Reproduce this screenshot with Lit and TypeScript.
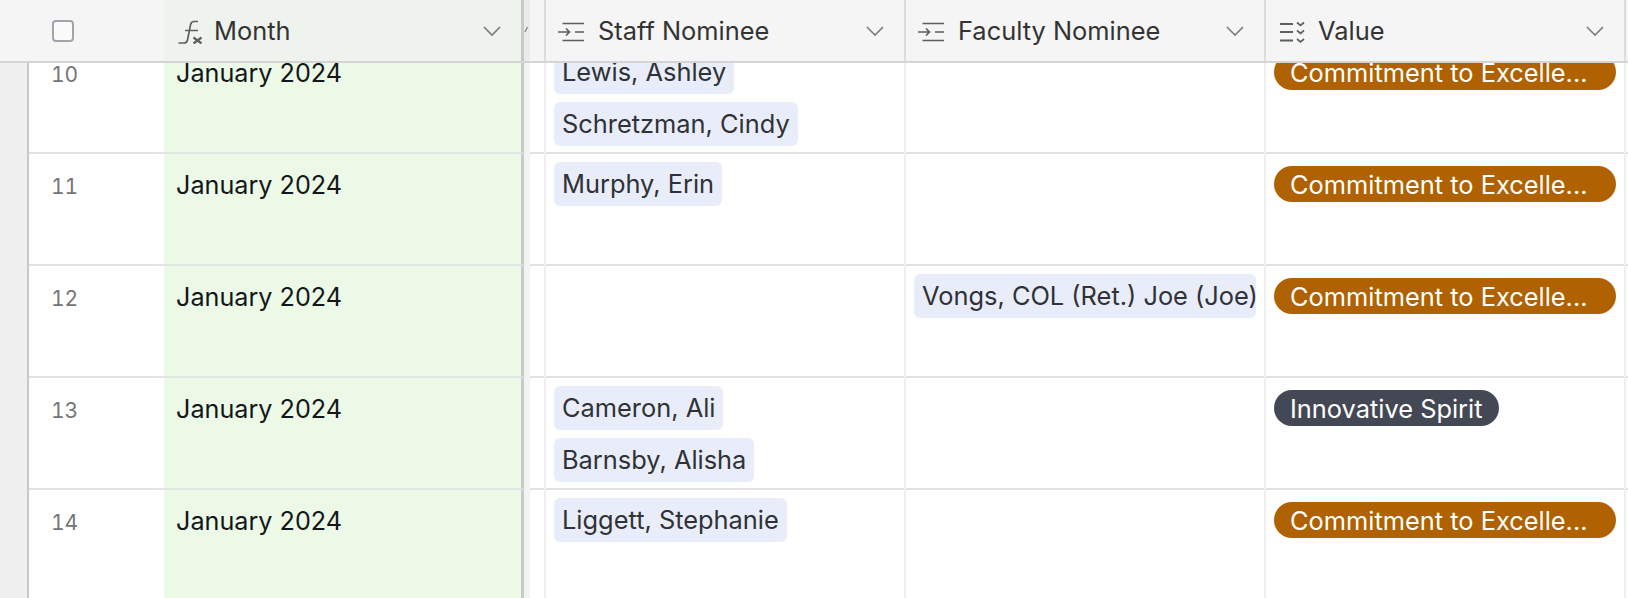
import { LitElement, html, css, svg } from 'lit';
import { customElement } from 'lit/decorators.js';

type Row = { id: number; staff: string[]; faculty?: string; value: 'commit' | 'innovate' };

const ROWS: Row[] = [
  { id: 10, staff: ['Lewis, Ashley', 'Schretzman, Cindy'], value: 'commit' },
  { id: 11, staff: ['Murphy, Erin'], value: 'commit' },
  { id: 12, staff: [], faculty: 'Vongs, COL (Ret.) Joe (Joe)', value: 'commit' },
  { id: 13, staff: ['Cameron, Ali', 'Barnsby, Alisha'], value: 'innovate' },
  { id: 14, staff: ['Liggett, Stephanie'], value: 'commit' },
];

const chevron = html`<svg class="chev" width="20" height="12" viewBox="0 0 20 12">
  <path d="M2 2l8 8 8-8" fill="none" stroke="#7b7b7b" stroke-width="1.6" />
</svg>`;

const fxIcon = html`<svg class="icon" width="26" height="26" viewBox="0 0 26 26">
  ${svg`<path d="M20 3.5h-4c-2 0-3 1-3.4 3L9.5 22c-.4 2-1.4 3-3.4 3H.5M7 12.5h13" fill="none" stroke="#5f5f5f" stroke-width="1.7"/>
  <path d="M15.5 19.5l8 6M23.5 19.5l-8 6" fill="none" stroke="#5f5f5f" stroke-width="2.2"/>`}
</svg>`;

const linkIcon = html`<svg class="icon" width="26" height="26" viewBox="0 0 26 26">
  ${svg`<path d="M4.5 5.5H26M17 14h9M4.5 22.5H26M0 14h11.5M8 10.5l3.5 3.5L8 17.5" fill="none" stroke="#5f5f5f" stroke-width="1.7"/>`}
</svg>`;

const selectIcon = html`<svg class="icon" width="26" height="26" viewBox="0 0 26 26">
  ${svg`<path d="M0 6h13M0 14h13M0 22.5h13" fill="none" stroke="#5f5f5f" stroke-width="2"/>
  <path d="M17 4.5l3.5 3 3.5-3M17 12.5l3.5 3 3.5-3M17 21l3.5 3 3.5-3" fill="none" stroke="#5f5f5f" stroke-width="1.7"/>`}
</svg>`;

@customElement('app-root')
export class AppRoot extends LitElement {
  static styles = css`
    :host {
      display: block;
      width: 1628px;
      height: 598px;
      overflow: hidden;
      background: #fff;
      font-family: Inter, 'Liberation Sans', sans-serif;
      font-size: 25.4px;
    }
    .grid {
      display: grid;
      grid-template-columns: 29px 135px 360px 22px 360px 360px 360px 2px;
    }
    .header {
      position: relative;
      z-index: 1;
      height: 61px;
      background: #f5f5f5;
      border-bottom: 2px solid #d4d4d4;
      color: #333;
    }
    .hcell {
      display: flex;
      align-items: center;
      gap: 14px;
      padding-left: 12px;
      border-right: 2px solid #dcdcdc;
      min-width: 0;
    }
    .hcell .title {
      flex: 1;
    }
    .chev {
      margin-right: 19px;
    }
    .hcheck {
      display: flex;
      align-items: center;
      padding-left: 23px;
    }
    .box {
      width: 18px;
      height: 18px;
      border: 2px solid #a0a5ab;
      border-radius: 4px;
      background: #fbfbfb;
    }
    .hmonth {
      background: #eff3ee;
      border-right: 3px solid #c9c9c9;
      padding-left: 14px;
      gap: 10px;
    }
    .hvalue {
      padding-left: 14px;
      gap: 12px;
    }
    .stripe {
      background: linear-gradient(90deg, #ebebeb 6px, transparent 6px);
      border-right: 2px solid #dcdcdc;
    }
    /* tail of a scrolled-away chevron showing beside the frozen edge */
    .tail {
      display: block;
      margin-top: 27px;
    }
    .body {
      margin-top: -21px;
    }
    .row {
      height: 110px;
      border-bottom: 2px solid #e2e2e2;
    }
    .gutter {
      background: #f0f0f0;
      border-right: 2px solid #c8c8c8;
      margin-bottom: -2px;
    }
    .num {
      color: #757575;
      font-size: 21px;
      font-variant-numeric: tabular-nums;
      line-height: 44px;
      padding: 11px 0 0 22px;
    }
    .month {
      background: #ebf9e6;
      border-right: 3px solid #c9c9c9;
      color: #14161a;
      font-size: 25.2px;
      line-height: 44px;
      padding: 9px 0 0 12px;
      margin-bottom: -2px;
      border-bottom: 2px solid #dde6e2;
    }
    .gap {
      background: linear-gradient(90deg, #f3f3f3 6px, transparent 6px);
      border-right: 2px solid #efefef;
      margin-bottom: -2px;
    }
    .cell {
      border-right: 2px solid #efefef;
      padding: 8px 8px 0 8px;
      display: flex;
      flex-direction: column;
      align-items: flex-start;
      gap: 8px;
      overflow: hidden;
      min-width: 0;
      margin-bottom: -2px;
    }
    .chip {
      height: 44px;
      line-height: 44px;
      padding: 0 8px;
      max-width: 100%;
      box-sizing: border-box;
      background: #e9edf9;
      border-radius: 6px;
      color: #2f3237;
      white-space: nowrap;
      overflow: hidden;
    }
    .pill {
      height: 36px;
      line-height: 37px;
      margin-top: 4px;
      padding: 0 16px;
      border-radius: 18px;
      color: #fff;
      white-space: nowrap;
    }
    .commit {
      background: #b06100;
      align-self: stretch;
    }
    .innovate {
      background: #444854;
    }
  `;

  render() {
    return html`
      <div class="grid header">
        <div></div>
        <div class="hcheck"><div class="box"></div></div>
        <div class="hcell hmonth">${fxIcon}<span class="title">Month</span>${chevron}</div>
        <div class="stripe">
          <svg class="tail" width="4" height="6" viewBox="0 0 4 6">
            <path d="M3.5 0L1 5" fill="none" stroke="#8a8a8a" stroke-width="1.4" />
          </svg>
        </div>
        <div class="hcell">${linkIcon}<span class="title">Staff Nominee</span>${chevron}</div>
        <div class="hcell">${linkIcon}<span class="title">Faculty Nominee</span>${chevron}</div>
        <div class="hcell hvalue">${selectIcon}<span class="title">Value</span>${chevron}</div>
        <div></div>
      </div>
      <div class="body">
        ${ROWS.map(
          (r) => html`
            <div class="grid row">
              <div class="gutter"></div>
              <div class="num">${r.id}</div>
              <div class="month">January 2024</div>
              <div class="gap"></div>
              <div class="cell">${r.staff.map((s) => html`<div class="chip">${s}</div>`)}</div>
              <div class="cell">${r.faculty ? html`<div class="chip">${r.faculty}</div>` : ''}</div>
              <div class="cell">
                ${r.value === 'commit'
                  ? html`<div class="pill commit">Commitment to Excelle...</div>`
                  : html`<div class="pill innovate">Innovative Spirit</div>`}
              </div>
              <div></div>
            </div>
          `
        )}
      </div>
    `;
  }
}
